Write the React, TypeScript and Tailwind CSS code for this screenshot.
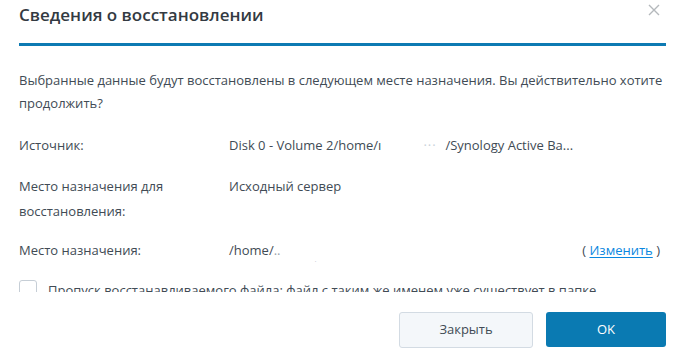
import React from "react";

export default function App() {
  return (
    <div
      className="w-[675px] h-[354px] bg-white overflow-hidden flex flex-col text-[#414b55]"
      style={{ fontFamily: '"Open Sans", "Noto Sans", sans-serif' }}
    >
      {/* header */}
      <div className="relative ml-[19px] mr-[9px] h-[46px] border-b-[3px] border-[#0d7ab3] shrink-0">
        <div className="pt-[3px] text-[17px] leading-[24px] font-semibold text-[#333a42]">
          Сведения о восстановлении
        </div>
        <button className="absolute right-[5px] top-[3px] w-[14px] h-[14px] flex items-center justify-center text-[#b4b8bc]">
          <svg width="12" height="12" viewBox="0 0 12 12" fill="none" stroke="currentColor" strokeWidth="1.4">
            <path d="M1 1 L11 11 M11 1 L1 11" />
          </svg>
        </button>
      </div>

      {/* body */}
      <div className="pl-[19px] pr-[5px] h-[246px] overflow-hidden shrink-0 text-[13px]">
        <p className="mt-[23px] leading-[23px]">
          Выбранные данные будут восстановлены в следующем месте назначения. Вы действительно хотите
          продолжить?
        </p>

        <div className="mt-[18px] flex leading-[24px]">
          <div className="w-[210px] shrink-0">Источник:</div>
          <div className="flex-1 whitespace-nowrap flex">
            <span>Disk 0 - Volume 2/home/ı</span>
            <span className="w-[64px] text-[#c9d2da] pl-[42px] tracking-[1px]">···</span>
            <span>/Synology Active Ba...</span>
          </div>
        </div>

        <div className="mt-[17px] flex leading-[25px]">
          <div className="w-[210px] shrink-0">
            Место назначения для
            <br />
            восстановления:
          </div>
          <div className="flex-1">Исходный сервер</div>
        </div>

        <div className="mt-[14px] flex leading-[24px] pr-[10px]">
          <div className="w-[210px] shrink-0">Место назначения:</div>
          <div className="flex-1 flex justify-between whitespace-nowrap">
            <span>
              /home/<span className="text-[#9aa4ad]">..</span>
              <span className="relative inline-block w-[36px]">
                <span className="absolute left-[34px] top-[-6px] text-[#b9c3cc] text-[8px]">·</span>
              </span>
            </span>
            <span>
              ({" "}
              <span className="text-[#0a87e0] underline underline-offset-2 cursor-pointer">Изменить</span>{" "}
              )
            </span>
          </div>
        </div>

        <div className="mt-[18px] flex items-start gap-[11px] leading-[20px]">
          <div className="w-[18px] h-[18px] rounded-[3px] border border-[#c6ced6] bg-white shrink-0" />
          <div className="whitespace-nowrap">
            Пропуск восстанавливаемого файла: файл с таким же именем уже существует в папке
          </div>
        </div>
      </div>

      {/* footer */}
      <div className="flex justify-end gap-[13px] pr-[9px] pt-[20px]">
        <button className="w-[134px] h-[36px] rounded-[3px] border border-[#d3dbe3] bg-[#f4f7fa] text-[13px] text-[#414b55]">
          Закрыть
        </button>
        <button className="w-[120px] h-[35px] rounded-[3px] bg-[#0a7ab2] text-[13px] text-white">
          OK
        </button>
      </div>
    </div>
  );
}
